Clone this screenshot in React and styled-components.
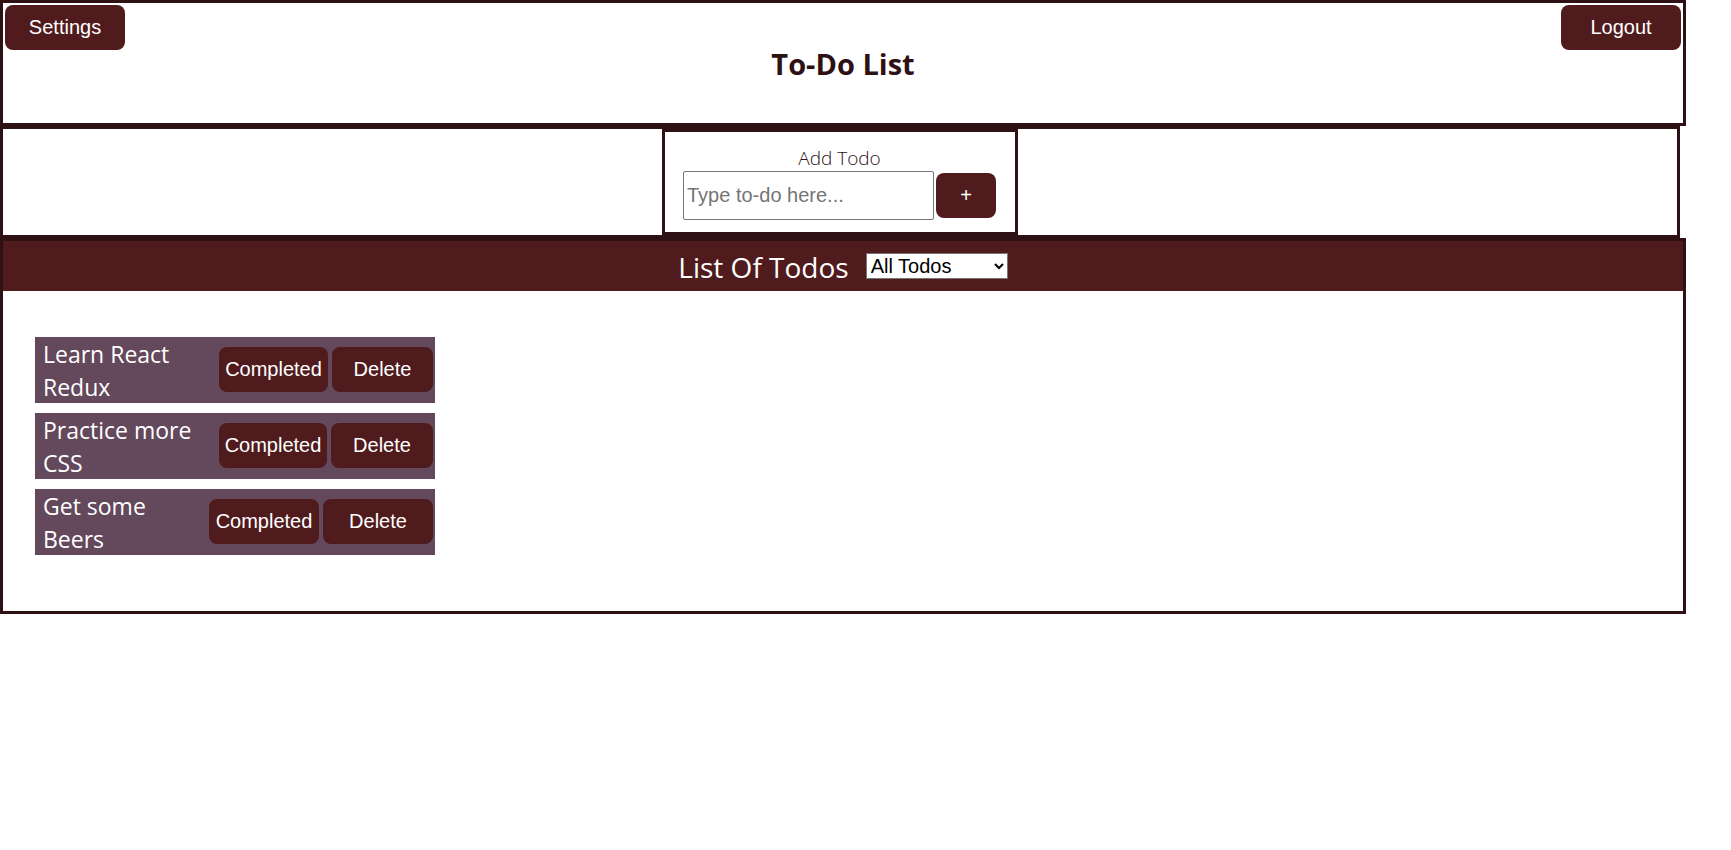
import React, { useState } from 'react';
import styled, { createGlobalStyle, ThemeProvider } from 'styled-components';

const theme = {
  dark: '#2e1114',
  wine: '#501b1d',
  plum: '#64485c',
  ui: '"Segoe UI", "Open Sans", "Noto Sans", sans-serif',
  control: 'Arial, "Liberation Sans", sans-serif',
};

const GlobalStyle = createGlobalStyle`
  *, *::before, *::after { box-sizing: border-box; }
  body {
    margin: 0;
    background: #fff;
    color: ${theme.dark};
    font-family: ${theme.ui};
  }
`;

const Page = styled.div`
  margin-right: 45px;
`;

const Header = styled.header`
  display: grid;
  grid-template-columns: 120px 1fr 120px;
  min-height: 126px;
  padding: 2px;
  border: 3px solid ${({ theme }) => theme.dark};
`;

const Title = styled.h1`
  margin: 0;
  padding-top: 2px;
  align-self: center;
  text-align: center;
  font-size: 29px;
  line-height: 40px;
  font-weight: 700;
`;

const Button = styled.button`
  width: ${({ $width }) => $width}px;
  height: 45px;
  padding: 0;
  border: 0;
  border-radius: 8px;
  background: ${({ theme }) => theme.wine};
  color: #fff;
  font-family: ${({ theme }) => theme.control};
  font-size: 20px;
  cursor: pointer;
`;

const AddSection = styled.section`
  display: flex;
  justify-content: center;
  margin-right: 6px;
  border: 3px solid ${({ theme }) => theme.dark};
`;

const AddForm = styled.form`
  display: flex;
  flex-direction: column;
  width: 356px;
  padding: 14px 19px 12px 18px;
  border: 3px solid ${({ theme }) => theme.dark};
`;

const AddLabel = styled.label`
  text-align: center;
  font-size: 19px;
  line-height: 25px;
  font-weight: 300;
`;

const AddRow = styled.div`
  display: flex;
  align-items: center;
  gap: 2px;
`;

const TextInput = styled.input`
  flex: 1;
  min-width: 0;
  height: 49px;
  padding: 1px 3px;
  border: 1px solid #767676;
  border-radius: 2px;
  font-family: ${({ theme }) => theme.control};
  font-size: 20px;

  &::placeholder { color: #757575; }
`;

const ListSection = styled.section`
  border: 3px solid ${({ theme }) => theme.dark};
`;

const ListBar = styled.div`
  display: flex;
  align-items: center;
  justify-content: center;
  gap: 17px;
  height: 50px;
  background: ${({ theme }) => theme.wine};
  color: #fff;
`;

const ListTitle = styled.h2`
  margin: 0;
  padding-top: 2px;
  font-size: 28px;
  line-height: 40px;
  font-weight: 400;
`;

const Filter = styled.select`
  width: 142px;
  height: 26px;
  border: 1px solid #767676;
  border-radius: 0;
  background-color: #fff;
  color: #000;
  font-family: ${({ theme }) => theme.control};
  font-size: 20px;
`;

const Todos = styled.ul`
  display: flex;
  flex-direction: column;
  gap: 10px;
  margin: 0;
  padding: 46px 32px 56px;
  list-style: none;
`;

const Todo = styled.li`
  display: flex;
  align-items: flex-start;
  width: 400px;
  max-width: 100%;
  padding: 0 2px 0 8px;
  background: ${({ theme }) => theme.plum};
  color: #fff;
`;

const TodoText = styled.span`
  flex: 1;
  margin-bottom: -1px;
  padding: 1px 14px 0 0;
  font-size: 23px;
  line-height: 33px;
`;

const Actions = styled.div`
  display: flex;
  gap: 4px;
  padding: 10px 0 11px;
`;

const initialTodos = [
  { id: 1, text: 'Learn React Redux', completeWidth: 109, deleteWidth: 101 },
  { id: 2, text: 'Practice more CSS', completeWidth: 108, deleteWidth: 102 },
  { id: 3, text: 'Get some Beers', completeWidth: 110, deleteWidth: 110 },
];

export default function App() {
  const [todos, setTodos] = useState(initialTodos);
  const [draft, setDraft] = useState('');
  const [filter, setFilter] = useState('all');

  const addTodo = (event) => {
    event.preventDefault();
    const text = draft.trim();
    if (!text) return;
    setTodos([...todos, { id: Date.now(), text, completeWidth: 110, deleteWidth: 110 }]);
    setDraft('');
  };

  const toggle = (id) =>
    setTodos(todos.map((t) => (t.id === id ? { ...t, done: !t.done } : t)));

  const shown = todos.filter(
    (t) => filter === 'all' || (filter === 'completed' ? t.done : !t.done)
  );

  return (
    <ThemeProvider theme={theme}>
      <GlobalStyle />
      <Page>
        <Header>
          <Button type="button" $width={120}>Settings</Button>
          <Title>To-Do List</Title>
          <Button type="button" $width={120}>Logout</Button>
        </Header>
        <AddSection>
          <AddForm onSubmit={addTodo}>
            <AddLabel htmlFor="new-todo">Add Todo</AddLabel>
            <AddRow>
              <TextInput
                id="new-todo"
                type="text"
                placeholder="Type to-do here..."
                value={draft}
                onChange={(e) => setDraft(e.target.value)}
              />
              <Button type="submit" $width={60}>+</Button>
            </AddRow>
          </AddForm>
        </AddSection>
        <ListSection>
          <ListBar>
            <ListTitle>List Of Todos</ListTitle>
            <Filter
              aria-label="Filter todos"
              value={filter}
              onChange={(e) => setFilter(e.target.value)}
            >
              <option value="all">All Todos</option>
              <option value="completed">Completed</option>
              <option value="uncompleted">Uncompleted</option>
            </Filter>
          </ListBar>
          <Todos>
            {shown.map((todo) => (
              <Todo key={todo.id}>
                <TodoText>{todo.text}</TodoText>
                <Actions>
                  <Button type="button" $width={todo.completeWidth} onClick={() => toggle(todo.id)}>
                    Completed
                  </Button>
                  <Button
                    type="button"
                    $width={todo.deleteWidth}
                    onClick={() => setTodos(todos.filter((t) => t.id !== todo.id))}
                  >
                    Delete
                  </Button>
                </Actions>
              </Todo>
            ))}
          </Todos>
        </ListSection>
      </Page>
    </ThemeProvider>
  );
}
